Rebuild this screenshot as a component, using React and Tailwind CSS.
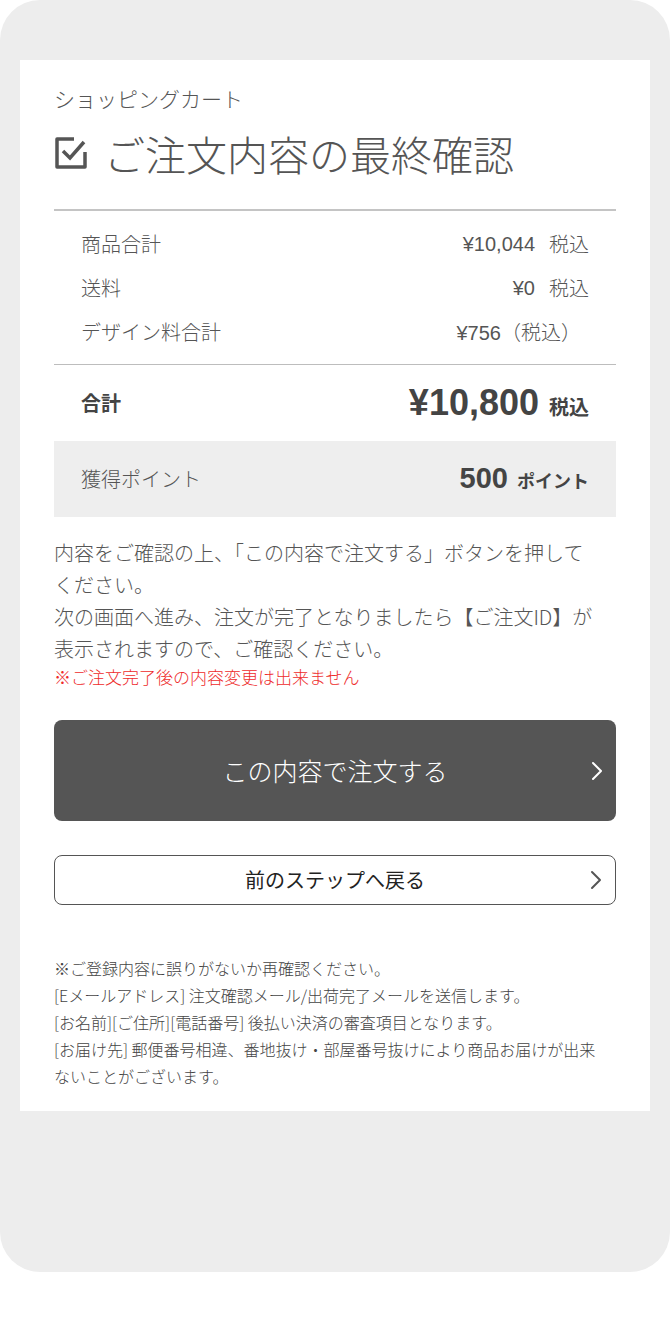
import React from 'react';

const font = { fontFamily: '"Noto Sans CJK JP", "Noto Sans", sans-serif' };
const num = { fontFamily: '"Liberation Sans", "Noto Sans CJK JP", sans-serif' };

const Chevron = ({ className }) => (
  <svg viewBox="0 0 12 20" className={className} fill="none" stroke="currentColor" strokeWidth="2" strokeLinecap="round" strokeLinejoin="round">
    <path d="M2 2l8 8-8 8" />
  </svg>
);

const CheckIcon = () => (
  <svg viewBox="0 0 34 34" className="w-[34px] h-[34px] text-[#555]" fill="none" stroke="currentColor" strokeWidth="3.5">
    <path d="M31 16v15H3V3h17" strokeLinejoin="round" />
    <path d="M9 15l7 7L30 6" />
  </svg>
);

const rows = [
  { label: '商品合計', value: '¥10,044', tax: '税込' },
  { label: '送料', value: '¥0', tax: '税込' },
  { label: 'デザイン料合計', value: '¥756', tax: null },
];

const App = () => {
  return (
    <div className="w-[670px] h-[1322px] bg-white" style={font}>
      <div className="h-[1272px] bg-[#ededed] rounded-[40px] pt-[60px] px-[20px]">
        <div className="bg-white h-[1051px] px-[34px] pt-[24px] text-[#555] font-light">
          <p className="text-[21px] leading-[28px]">ショッピングカート</p>

          <div className="flex items-center gap-[16px] mt-[16px]">
            <CheckIcon />
            <h1 className="text-[41px] leading-[50px]">ご注文内容の最終確認</h1>
          </div>

          <div className="mt-[31px] border-t-2 border-[#c4c4c4]" />

          <div className="px-[27px] pt-[11px] pb-[10px]">
            {rows.map((r) => (
              <div key={r.label} className="flex justify-between items-center h-[44px] text-[20px]">
                <span>{r.label}</span>
                {r.tax ? (
                  <span className="flex items-center gap-[14px]">
                    <span style={num}>{r.value}</span>
                    <span>{r.tax}</span>
                  </span>
                ) : (
                  <span className="mr-[8px]">
                    <span style={num}>{r.value}</span>（税込）
                  </span>
                )}
              </div>
            ))}
          </div>

          <div className="border-t border-[#bdbdbd]" />

          <div className="flex justify-between items-center px-[27px] h-[76px]">
            <span className="text-[20px] font-bold text-[#444]">合計</span>
            <span className="flex items-baseline gap-[10px] font-bold text-[#444]">
              <span className="text-[36px] leading-none" style={num}>¥10,800</span>
              <span className="text-[20px]">税込</span>
            </span>
          </div>

          <div className="bg-[#eeeeee] h-[76px] px-[27px] flex justify-between items-center">
            <span className="text-[20px]">獲得ポイント</span>
            <span className="flex items-baseline gap-[9px] font-bold text-[#444]">
              <span className="text-[29px] leading-none" style={num}>500</span>
              <span className="text-[18px]">ポイント</span>
            </span>
          </div>

          <div className="mt-[20px] text-[20px] leading-[32px]">
            <p>内容をご確認の上、「この内容で注文する」ボタンを押して<br />ください。</p>
            <p>次の画面へ進み、注文が完了となりましたら【ご注文ID】が<br />表示されますので、ご確認ください。</p>
            <p className="text-[17px] leading-[24px] text-[#ee2b2b]">※ご注文完了後の内容変更は出来ません</p>
          </div>

          <button className="mt-[31px] w-full h-[101px] rounded-[8px] bg-[#555555] text-white text-[25px] font-light relative flex items-center justify-center">
            この内容で注文する
            <Chevron className="absolute right-[13px] w-[12px] h-[20px]" />
          </button>

          <button className="mt-[34px] w-full h-[50px] rounded-[8px] border-[1.5px] border-[#555] text-[#222] text-[20px] font-normal relative flex items-center justify-center">
            前のステップへ戻る
            <Chevron className="absolute right-[13px] w-[12px] h-[20px] text-[#555]" />
          </button>

          <div className="mt-[50px] text-[16px] leading-[27px] text-[#444]">
            <p>※ご登録内容に誤りがないか再確認ください。</p>
            <p>[Eメールアドレス] 注文確認メール/出荷完了メールを送信します。</p>
            <p>[お名前][ご住所][電話番号] 後払い決済の審査項目となります。</p>
            <p>[お届け先] 郵便番号相違、番地抜け・部屋番号抜けにより商品お届けが出来<br />ないことがございます。</p>
          </div>
        </div>
      </div>
    </div>
  );
};

export default App;
